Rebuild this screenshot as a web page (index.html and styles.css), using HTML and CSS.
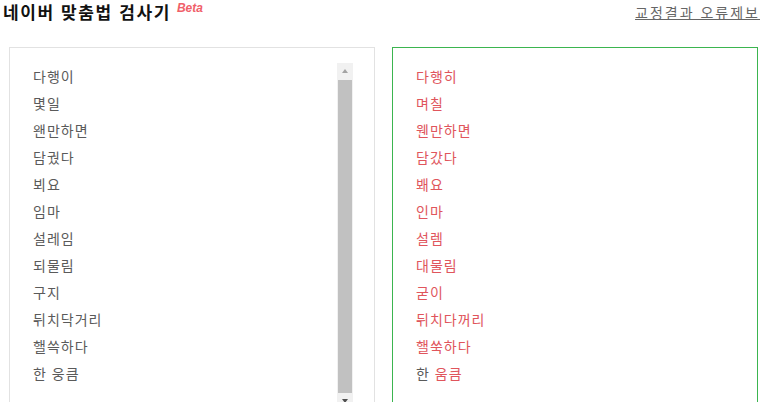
FILE: index.html
```html
<!DOCTYPE html>
<html lang="ko">
<head>
<meta charset="utf-8">
<link rel="stylesheet" href="styles.css">
</head>
<body>
<div class="page">
  <header class="top">
    <h1 class="title">네이버 맞춤법 검사기<span class="beta">Beta</span></h1>
    <a class="report" href="#">교정결과 오류제보</a>
  </header>
  <div class="panels">
    <div class="panel left">
      <ul class="words">
        <li>다행이</li>
        <li>몇일</li>
        <li>왠만하면</li>
        <li>담궜다</li>
        <li>뵈요</li>
        <li>임마</li>
        <li>설레임</li>
        <li>되물림</li>
        <li>구지</li>
        <li>뒤치닥거리</li>
        <li>핼쓱하다</li>
        <li>한 웅큼</li>
      </ul>
      <div class="scrollbar">
        <div class="arrow up"></div>
        <div class="thumb"></div>
        <div class="arrow down"></div>
      </div>
    </div>
    <div class="panel right">
      <ul class="words fixed">
        <li>다행히</li>
        <li>며칠</li>
        <li>웬만하면</li>
        <li>담갔다</li>
        <li>봬요</li>
        <li>인마</li>
        <li>설렘</li>
        <li>대물림</li>
        <li>굳이</li>
        <li>뒤치다꺼리</li>
        <li>핼쑥하다</li>
        <li><span class="plain">한</span> 움큼</li>
      </ul>
    </div>
  </div>
</div>
</body>
</html>
```

FILE: styles.css
```css
html, body {
  margin: 0;
  padding: 0;
  background: #fff;
}
body {
  font-family: "Noto Sans CJK KR", "Noto Sans", sans-serif;
  overflow: hidden;
}
.page {
  width: 766px;
  height: 402px;
  overflow: hidden;
}
.top {
  display: flex;
  justify-content: space-between;
  align-items: flex-start;
  height: 47px;
  padding: 0 6px 0 3px;
}
.title {
  margin: 0;
  font-size: 17px;
  font-weight: bold;
  letter-spacing: 1.6px;
  color: #111;
  line-height: 24px;
  display: flex;
  align-items: flex-start;
}
.beta {
  font-family: "Liberation Sans", sans-serif;
  font-size: 12px;
  font-style: italic;
  font-weight: bold;
  color: #f0606a;
  letter-spacing: 0;
  line-height: 12px;
  margin-left: 6px;
  margin-top: 2px;
}
.report {
  font-size: 14px;
  color: #666;
  text-decoration: underline;
  line-height: 24px;
  letter-spacing: 2px;
}
.panels {
  display: flex;
  gap: 17px;
  padding-left: 9px;
}
.panel {
  box-sizing: border-box;
  height: 400px;
  width: 366px;
}
.left {
  border: 1px solid #e2e2e2;
  display: flex;
  align-items: flex-start;
  padding: 15px 21px 0 23px;
}
.right {
  border: 1px solid #3bb54f;
  padding: 15px 21px 0 23px;
}
.words {
  list-style: none;
  margin: 0;
  padding: 0;
  flex: 1;
  font-size: 14px;
  color: #5a5a5a;
  letter-spacing: 1px;
}
.words li {
  height: 27px;
  line-height: 27px;
}
.fixed {
  color: #e0555c;
}
.plain {
  color: #5a5a5a;
}
.scrollbar {
  width: 16px;
  height: 347px;
  background: #f1f1f1;
  display: flex;
  flex-direction: column;
  align-items: center;
}
.arrow {
  height: 17px;
  width: 16px;
  position: relative;
  flex: none;
}
.arrow::after {
  content: "";
  position: absolute;
  left: 5px;
  border-left: 3px solid transparent;
  border-right: 3px solid transparent;
}
.up::after {
  top: 6px;
  border-bottom: 4px solid #a3a3a3;
}
.down::after {
  top: 6px;
  border-top: 4px solid #505050;
}
.thumb {
  width: 14px;
  flex: 1;
  background: #c1c1c1;
}
```
